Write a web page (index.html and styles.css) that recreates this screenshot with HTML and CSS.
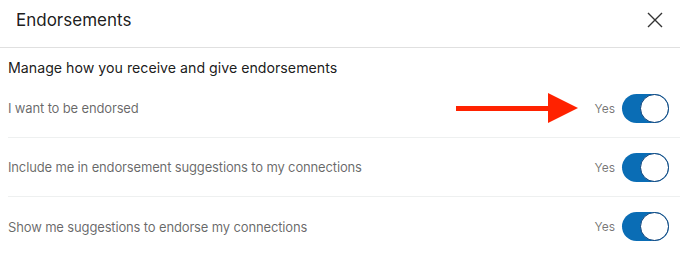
FILE: index.html
```html
<!DOCTYPE html>
<html lang="en">
<head>
    <meta charset="UTF-8">
    <meta name="viewport" content="width=device-width, initial-scale=1.0">
    <title>Endorsements</title>

    <link rel="stylesheet" href="styles.css">

</head>
<body>

    <main class="modal">
        <header class="modal-header">
            <h2>Endorsements</h2>
            <button class="close" aria-label="Dismiss">
                <svg width="16" height="16" viewBox="0 0 16 16">
                    <path d="M1 1 L15 15 M15 1 L1 15" stroke="#333" stroke-width="1.4" fill="none"/>
                </svg>
            </button>
        </header>

        <section class="settings">
            <h3>Manage how you receive and give endorsements</h3>

            <div class="row">
                <span class="label">I want to be endorsed</span>
                <div class="control">
                    <!-- annotation arrow -->
                    <div class="arrow">
                        <span class="shaft"></span>
                        <span class="head"></span>
                    </div>
                    <span class="state">Yes</span>
                    <span class="toggle"><span class="knob"></span></span>
                </div>
            </div>

            <div class="row">
                <span class="label">Include me in endorsement suggestions to my connections</span>
                <div class="control">
                    <span class="state">Yes</span>
                    <span class="toggle"><span class="knob"></span></span>
                </div>
            </div>

            <div class="row">
                <span class="label">Show me suggestions to endorse my connections</span>
                <div class="control">
                    <span class="state">Yes</span>
                    <span class="toggle"><span class="knob"></span></span>
                </div>
            </div>
        </section>
    </main>

</body>
</html>
```

FILE: styles.css
```css
*{
    margin: 0;padding:0;
    box-sizing: border-box
}

body{
    font-family: Inter, "Noto Sans", sans-serif;
    background: white;
    color: rgba(0, 0, 0, 0.9)
}

.modal-header{
    display:flex;
    justify-content:space-between;
    align-items:center;
    height:48px;
    padding: 0 16px 8px 16px;
    border-bottom: 1px solid #e0e0e0
}

.modal-header h2{
    font-size:17px;
    font-weight:400
}

.close{
    background:none;
    border:none;
    width:16px;height:16px;
    margin-right:1px
}

.close svg{
    display:block
}

.settings{
    padding-left:8px
}

.settings h3{
    font-size:14.2px;
    font-weight:400;
    height:31px;
    padding-top:11px
}

.row{
    display:flex;
    justify-content:space-between;
    align-items:center;
    height:59px;
    border-bottom:1px solid #eef0f0;
    padding-right:11px
}

.row:last-child{
    border-bottom:none
}

.label{
    font-size:13px;
    letter-spacing:-0.15px;
    color: rgba(0, 0, 0, 0.6)
}

.control{
    display:flex;
    align-items:center;
    gap:7px
}

.state{
    font-size:12px;
    color: rgba(0, 0, 0, 0.55)
}

.toggle{
    display:flex;
    justify-content:flex-end;
    width:47px;height:29px;
    border-radius:15px;
    background:#0a6db5
}

.knob{
    width:29px;height:29px;
    border-radius:50%;
    background:white;
    border:1.5px solid #063e78
}

.arrow{
    display:flex;
    align-items:center;
    margin-right:9px
}

.shaft{
    width:92px;height:5px;
    background:#ff2200
}

.head{
    width:0;height:0;
    border-top:15px solid transparent;
    border-bottom:15px solid transparent;
    border-left:30px solid #ff2200
}
```
